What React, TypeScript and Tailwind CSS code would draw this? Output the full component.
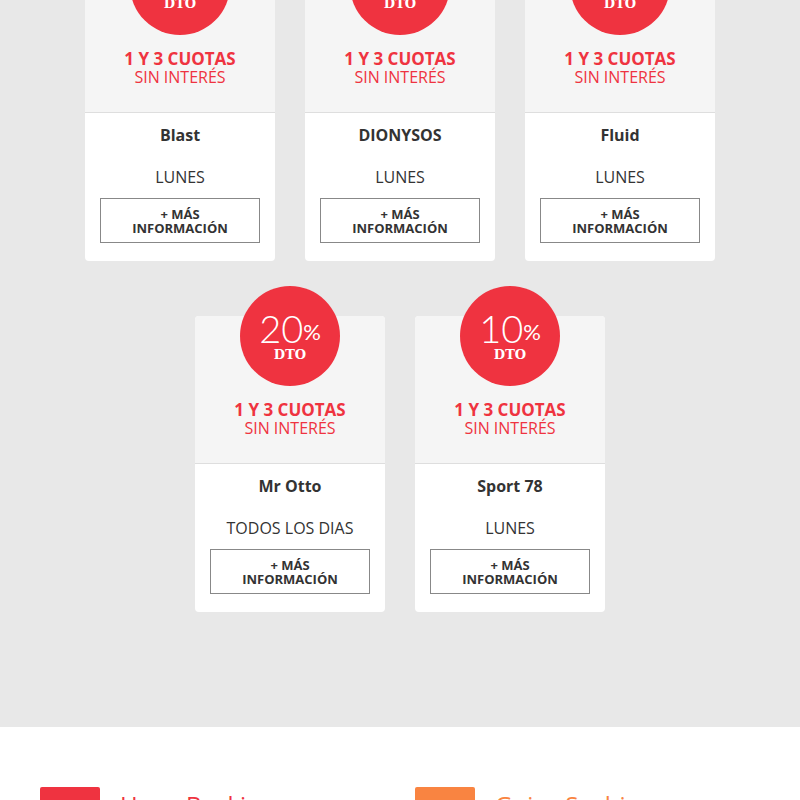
const deals = [
  { name: "Blast", day: "LUNES", pct: "15" },
  { name: "DIONYSOS", day: "LUNES", pct: "15" },
  { name: "Fluid", day: "LUNES", pct: "15" },
  { name: "Mr Otto", day: "TODOS LOS DIAS", pct: "20" },
  { name: "Sport 78", day: "LUNES", pct: "10" },
];

function DealCard({ name, day, pct }: { name: string; day: string; pct: string }) {
  return (
    <div className="w-[190px] pt-[30px]">
      <div className="bg-white rounded-[4px] flex flex-col">
        <div className="bg-[#f5f5f5] rounded-t-[4px] flex flex-col items-center pb-[26px] border-b border-[#dedede]">
          <div className="-mt-[30px] w-[100px] h-[100px] rounded-full bg-[#ef3340] flex flex-col items-center justify-center text-white">
            <div className="flex items-start">
              <span className="font-['Lato'] font-light text-[38px] leading-[38px]">{pct}</span>
              <span className="font-['Lato'] text-[22px] leading-[22px] mt-[12px]">%</span>
            </div>
            <span className="font-['DejaVu_Serif'] font-bold text-[13px] leading-[16px]">DTO</span>
          </div>
          <div className="mt-[15px] text-center font-['Open_Sans'] text-[#ef3340] leading-[18px]">
            <div className="font-bold text-[17px]">1 Y 3 CUOTAS</div>
            <div className="text-[16px]">SIN INTERÉS</div>
          </div>
        </div>
        <div className="flex flex-col items-center pt-[10px] pb-[18px] font-['Open_Sans'] text-[#333]">
          <div className="font-bold text-[16px] leading-[24px]">{name}</div>
          <div className="mt-[18px] text-[16px] leading-[24px]">{day}</div>
          <button className="mt-[9px] w-[160px] h-[45px] border border-[#888] flex flex-col items-center justify-center font-bold text-[13px] leading-[14px] text-[#333]">
            <span>+ MÁS</span>
            <span>INFORMACIÓN</span>
          </button>
        </div>
      </div>
    </div>
  );
}

export default function App() {
  return (
    <div className="w-[800px] h-[800px] overflow-hidden bg-white">
      <section className="bg-[#e8e8e8] -mt-[65px] pb-[115px]">
        <div className="w-[630px] mx-auto flex justify-center gap-x-[30px]">
          {deals.slice(0, 3).map((d) => (
            <DealCard key={d.name} {...d} />
          ))}
        </div>
        <div className="w-[630px] mx-auto flex justify-center gap-x-[30px] mt-[25px]">
          {deals.slice(3).map((d) => (
            <DealCard key={d.name} {...d} />
          ))}
        </div>
      </section>
      <section className="pt-[60px] px-[40px] grid grid-cols-[375px_1fr]">
        <div className="flex items-start gap-[20px]">
          <div className="w-[60px] h-[60px] bg-[#ef3340] rounded-t-[2px]" />
          <div className="font-['Open_Sans'] text-[24px] leading-[24px] mt-[6px] text-[#ef3340]">Hugo Boskin</div>
        </div>
        <div className="flex items-start gap-[20px]">
          <div className="w-[60px] h-[60px] bg-[#f98441] rounded-t-[2px]" />
          <div className="font-['Open_Sans'] text-[24px] leading-[24px] mt-[6px] text-[#f98441]">Guiso Suchi</div>
        </div>
      </section>
    </div>
  );
}
